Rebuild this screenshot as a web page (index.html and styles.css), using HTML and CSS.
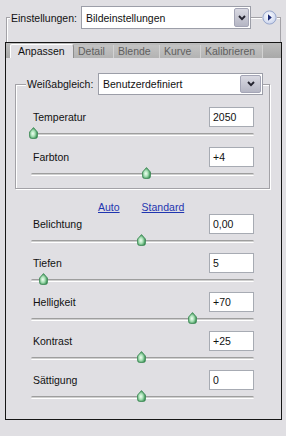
FILE: index.html
```html
<!DOCTYPE html>
<html lang="de">
<head>
<meta charset="utf-8">
<title>Camera Raw</title>
<link rel="stylesheet" href="styles.css">
</head>
<body>
<div class="preset">
  <div class="preset-head">
    <span class="preset-label">Einstellungen:</span>
    <div class="select select-preset">
      <span class="select-value">Bildeinstellungen</span>
      <span class="select-btn"><svg width="8" height="6" viewBox="0 0 8 6"><path d="M1 1 L4 4.2 L7 1" fill="none" stroke="#23232f" stroke-width="1.9"/></svg></span>
    </div>
    <span class="menu-btn"><svg width="15" height="15" viewBox="0 0 15 15"><defs><radialGradient id="mb" cx="45%" cy="40%" r="60%"><stop offset="0" stop-color="#ffffff"/><stop offset="1" stop-color="#c9d3ec"/></radialGradient></defs><circle cx="7.5" cy="7.5" r="6.6" fill="url(#mb)" stroke="#97a6cb" stroke-width="1"/><path d="M6 4.3 L9.8 7.5 L6 10.7 Z" fill="#1b2a76"/></svg></span>
  </div>
</div>
<div class="panel">
  <div class="tabs">
    <span class="tab tab-active">Anpassen</span>
    <span class="tab tab-detail">Detail</span>
    <span class="tab tab-blende">Blende</span>
    <span class="tab tab-kurve">Kurve</span>
    <span class="tab tab-kal">Kalibrieren</span>
  </div>
  <div class="panel-body">
    <div class="wb">
      <div class="wb-head">
        <span class="wb-label">Weißabgleich:</span>
        <div class="select select-wb">
          <span class="select-value">Benutzerdefiniert</span>
          <span class="select-btn"><svg width="8" height="6" viewBox="0 0 8 6"><path d="M1 1 L4 4.2 L7 1" fill="none" stroke="#23232f" stroke-width="1.9"/></svg></span>
        </div>
      </div>
      <div class="ctl ctl-first">
        <div class="ctl-head"><span>Temperatur</span><span class="ctl-input">2050</span></div>
        <div class="slider"><div class="track"></div><svg class="thumb" style="left:-2px" width="9" height="12" viewBox="0 0 9 12"><use href="#thumb"/></svg></div>
      </div>
      <div class="ctl ctl-wb2">
        <div class="ctl-head"><span>Farbton</span><span class="ctl-input">+4</span></div>
        <div class="slider"><div class="track"></div><svg class="thumb" style="left:111px" width="9" height="12" viewBox="0 0 9 12"><use href="#thumb"/></svg></div>
      </div>
    </div>
    <div class="links"><a href="#">Auto</a><a href="#">Standard</a></div>
    <div class="ctl-list">
      <div class="ctl">
        <div class="ctl-head"><span>Belichtung</span><span class="ctl-input">0,00</span></div>
        <div class="slider"><div class="track"></div><svg class="thumb" style="left:106px" width="9" height="12" viewBox="0 0 9 12"><use href="#thumb"/></svg></div>
      </div>
      <div class="ctl">
        <div class="ctl-head"><span>Tiefen</span><span class="ctl-input">5</span></div>
        <div class="slider"><div class="track"></div><svg class="thumb" style="left:8px" width="9" height="12" viewBox="0 0 9 12"><use href="#thumb"/></svg></div>
      </div>
      <div class="ctl">
        <div class="ctl-head"><span>Helligkeit</span><span class="ctl-input">+70</span></div>
        <div class="slider"><div class="track"></div><svg class="thumb" style="left:157px" width="9" height="12" viewBox="0 0 9 12"><use href="#thumb"/></svg></div>
      </div>
      <div class="ctl">
        <div class="ctl-head"><span>Kontrast</span><span class="ctl-input">+25</span></div>
        <div class="slider"><div class="track"></div><svg class="thumb" style="left:106px" width="9" height="12" viewBox="0 0 9 12"><use href="#thumb"/></svg></div>
      </div>
      <div class="ctl">
        <div class="ctl-head"><span>Sättigung</span><span class="ctl-input">0</span></div>
        <div class="slider"><div class="track"></div><svg class="thumb" style="left:106px" width="9" height="12" viewBox="0 0 9 12"><use href="#thumb"/></svg></div>
      </div>
    </div>
  </div>
</div>
<svg class="defs" width="0" height="0">
  <defs>
    <radialGradient id="tg" cx="42%" cy="55%" r="60%">
      <stop offset="0" stop-color="#f2fff4"/>
      <stop offset="0.45" stop-color="#a9e0b6"/>
      <stop offset="1" stop-color="#2f8a4c"/>
    </radialGradient>
    <g id="thumb">
      <path d="M4.5 0.6 L8.4 5 V9.4 Q8.4 11.4 6.4 11.4 H2.6 Q0.6 11.4 0.6 9.4 V5 Z" fill="url(#tg)" stroke="#3f8a57" stroke-width="0.9"/>
    </g>
  </defs>
</svg>
</body>
</html>
```
FILE: styles.css
```css
* { box-sizing: border-box; }
html, body { margin: 0; padding: 0; }
body {
  width: 286px;
  height: 436px;
  background: #e0dfe3;
  font-family: "Liberation Sans", Arial, sans-serif;
  font-size: 10.5px;
  color: #111;
  overflow: hidden;
}
.defs { position: absolute; width: 0; height: 0; }

/* top preset group */
.preset {
  margin: 17px 5px 0 6px;
  height: 25px;
  border: 1px solid #a3a2a7;
  border-bottom: 0;
  box-shadow: inset 1px 1px 0 #fff;
}
.preset-head {
  display: flex;
  align-items: center;
  height: 23px;
  margin-top: -12px;
  padding-left: 3px;
}
.preset-label {
  flex: 0 0 71px;
  height: 14px;
  line-height: 14px;
  padding-left: 1px;
  background: #e0dfe3;
}
.select {
  display: flex;
  align-items: stretch;
  background: #fff;
  border: 1px solid #9c9ea8;
}
.select-preset { width: 170px; height: 23px; }
.select-value {
  flex: 1;
  padding-left: 4px;
  display: flex;
  align-items: center;
}
.select-btn {
  width: 15px;
  margin: 1px;
  display: flex;
  align-items: center;
  justify-content: center;
  background: linear-gradient(#d9d9e2, #b5b6c4);
  border: 1px solid #a4a5b6;
  border-radius: 2px;
}
.menu-btn {
  display: block;
  width: 15px;
  height: 15px;
  margin-left: 11px;
  background: #e0dfe3;
  border-radius: 50%;
}
.menu-btn svg { display: block; }

/* tab panel */
.panel {
  margin: 0 4px 0 5px;
  border: 1px solid #161616;
}
.tabs {
  display: flex;
  align-items: flex-end;
  height: 15px;
  padding-left: 4px;
  background: linear-gradient(#bdbdbd, #a8a8a8);
}
.tab {
  height: 13px;
  line-height: 12px;
  padding-left: 4px;
  color: #5f5f5f;
  border-left: 1px solid #d2d2d2;
  background: linear-gradient(#c3c3c3, #b3b3b3);
  white-space: nowrap;
}
.tab-active {
  width: 64px;
  height: 14px;
  line-height: 13px;
  padding-left: 7px;
  color: #111;
  background: #e0dfe3;
  border-left: 1px solid #fff;
  border-top: 1px solid #fff;
  border-right: 1px solid #8d8d8d;
  border-radius: 2px 3px 0 0;
}
.tab-detail { width: 39px; border-left: 0; }
.tab-blende { width: 46px; }
.tab-kurve { width: 41px; }
.tab-kal { width: 63px; border-right: 1px solid #d2d2d2; }

.panel-body {
  padding-bottom: 15px;
}

/* white balance group */
.wb {
  margin: 26px 11px 0 9px;
  border: 1px solid #a3a2a7;
  box-shadow: inset 1px 1px 0 #fff, 1px 1px 0 #fff;
  padding: 0 15px 7px 17px;
}
.wb-head {
  display: flex;
  align-items: center;
  height: 22px;
  margin: -12px -15px 0 -7px;
}
.wb-label {
  flex: 0 0 72px;
  height: 14px;
  line-height: 14px;
  padding-left: 1px;
  background: #e0dfe3;
}
.select-wb { width: 165px; height: 22px; }
.select-wb .select-btn { width: 21px; }

.ctl { display: flex; flex-direction: column; }
.ctl-first { margin-top: 12px; }
.ctl-wb2 { margin-top: 6px; }
.ctl-head {
  display: flex;
  align-items: center;
  justify-content: space-between;
  height: 20px;
}
.ctl-input {
  width: 45px;
  height: 20px;
  line-height: 18px;
  padding-left: 3px;
  background: #fff;
  border: 1px solid #a7abb3;
  color: #111;
}
.slider {
  position: relative;
  height: 14px;
  margin-left: -2px;
}
.track {
  margin-top: 6px;
  height: 3px;
  border-radius: 2px;
  background: linear-gradient(#9e9e9e 0 1px, #cfcfcf 1px 2px, #fff 2px);
}
.thumb {
  position: absolute;
  top: 0;
  display: block;
}

/* links */
.links {
  display: flex;
  gap: 22px;
  height: 12px;
  line-height: 12px;
  margin-top: 12px;
  padding-left: 92px;
}
.links a {
  color: #1f35b0;
  text-decoration: underline;
}

.ctl-list {
  display: flex;
  flex-direction: column;
  gap: 5px;
  margin-top: 1px;
  padding: 0 27px;
}
```
